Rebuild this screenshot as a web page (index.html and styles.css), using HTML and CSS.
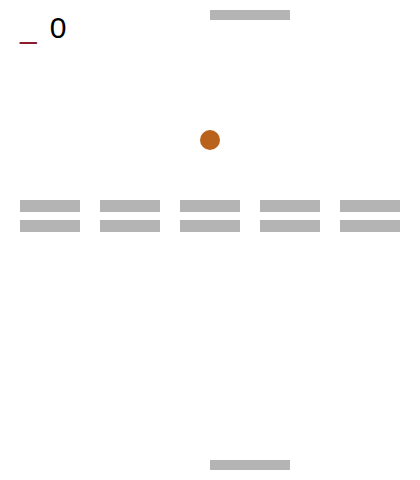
FILE: index.html
```html
<!DOCTYPE html>
<html>
<head>
<meta charset="utf-8">
<link rel="stylesheet" href="styles.css">
</head>
<body>
<div class="game">
  <div class="score"><span class="cursor">_</span><span class="points">0</span></div>
  <div class="paddle paddle-top"></div>
  <div class="ball"></div>
  <div class="bricks">
    <div class="brick"></div><div class="brick"></div><div class="brick"></div><div class="brick"></div><div class="brick"></div>
    <div class="brick"></div><div class="brick"></div><div class="brick"></div><div class="brick"></div><div class="brick"></div>
  </div>
  <div class="paddle paddle-bottom"></div>
</div>
</body>
</html>
```
FILE: styles.css
```css
html, body {
  margin: 0;
  padding: 0;
  background: #ffffff;
}
.game {
  position: relative;
  width: 420px;
  height: 480px;
  display: flex;
  flex-direction: column;
  overflow: hidden;
}
.score {
  position: absolute;
  left: 20px;
  top: 13px;
  display: flex;
  gap: 13px;
  font-family: "Liberation Sans", Arial, sans-serif;
  font-size: 30px;
  line-height: 30px;
}
.cursor {
  color: #8b1c2c;
}
.points {
  color: #000000;
}
.paddle {
  width: 80px;
  height: 10px;
  background: #b4b4b4;
  margin-left: 210px;
}
.paddle-top {
  margin-top: 10px;
}
.ball {
  width: 20px;
  height: 20px;
  border-radius: 50%;
  background: #b8621b;
  margin-top: 110px;
  margin-left: 200px;
}
.bricks {
  margin-top: 50px;
  padding-left: 20px;
  display: grid;
  grid-template-columns: repeat(5, 60px);
  grid-auto-rows: 12px;
  column-gap: 20px;
  row-gap: 8px;
}
.brick {
  background: #b4b4b4;
}
.paddle-bottom {
  margin-top: 228px;
}
```
